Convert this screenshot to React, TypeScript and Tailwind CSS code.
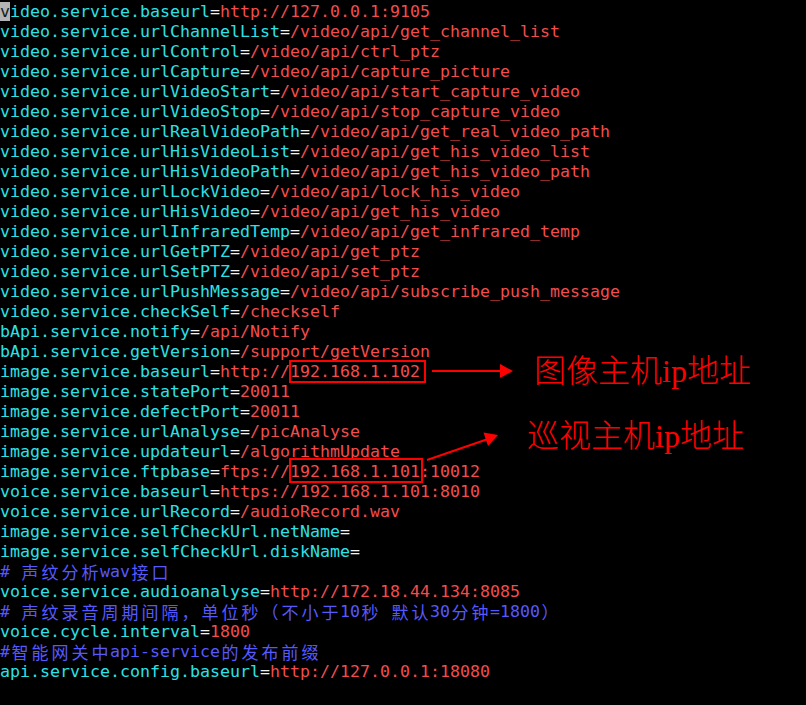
import * as React from "react";

type Seg = [string, "k" | "e" | "v" | "c"];

const KEY = "#2ae2e8";
const VAL = "#f24d4d";
const CMT = "#5858ff";

// key=value lines from the properties file, comments start with #
const LINES: string[] = [
  "video.service.baseurl=http://127.0.0.1:9105",
  "video.service.urlChannelList=/video/api/get_channel_list",
  "video.service.urlControl=/video/api/ctrl_ptz",
  "video.service.urlCapture=/video/api/capture_picture",
  "video.service.urlVideoStart=/video/api/start_capture_video",
  "video.service.urlVideoStop=/video/api/stop_capture_video",
  "video.service.urlRealVideoPath=/video/api/get_real_video_path",
  "video.service.urlHisVideoList=/video/api/get_his_video_list",
  "video.service.urlHisVideoPath=/video/api/get_his_video_path",
  "video.service.urlLockVideo=/video/api/lock_his_video",
  "video.service.urlHisVideo=/video/api/get_his_video",
  "video.service.urlInfraredTemp=/video/api/get_infrared_temp",
  "video.service.urlGetPTZ=/video/api/get_ptz",
  "video.service.urlSetPTZ=/video/api/set_ptz",
  "video.service.urlPushMessage=/video/api/subscribe_push_message",
  "video.service.checkSelf=/checkself",
  "bApi.service.notify=/api/Notify",
  "bApi.service.getVersion=/support/getVersion",
  "image.service.baseurl=http://192.168.1.102",
  "image.service.statePort=20011",
  "image.service.defectPort=20011",
  "image.service.urlAnalyse=/picAnalyse",
  "image.service.updateurl=/algorithmUpdate",
  "image.service.ftpbase=ftps://192.168.1.101:10012",
  "voice.service.baseurl=https://192.168.1.101:8010",
  "voice.service.urlRecord=/audioRecord.wav",
  "image.service.selfCheckUrl.netName=",
  "image.service.selfCheckUrl.diskName=",
  "# 声纹分析wav接口",
  "voice.service.audioanalyse=http://172.18.44.134:8085",
  "# 声纹录音周期间隔，单位秒（不小于10秒 默认30分钟=1800）",
  "voice.cycle.interval=1800",
  "#智能网关中api-service的发布前缀",
  "api.service.config.baseurl=http://127.0.0.1:18080",
];

function split(line: string): Seg[] {
  if (line.startsWith("#")) return [[line, "c"]];
  const i = line.indexOf("=");
  return [
    [line.slice(0, i), "k"],
    ["=", "e"],
    [line.slice(i + 1), "v"],
  ];
}

const isWide = (ch: string) => ch.charCodeAt(0) >= 0x2e80;

function Chars({ text }: { text: string }) {
  // terminal cells: CJK glyphs take two columns (20px)
  const out: React.ReactNode[] = [];
  let buf = "";
  Array.from(text).forEach((ch, i) => {
    if (isWide(ch)) {
      if (buf) out.push(buf);
      buf = "";
      out.push(
        <span
          key={i}
          className="inline-block w-[20px] text-center align-top text-[17px] font-['Noto_Sans_CJK_SC',sans-serif]"
        >
          {ch}
        </span>
      );
    } else buf += ch;
  });
  if (buf) out.push(buf);
  return <>{out}</>;
}

function Line({ line, first }: { line: string; first: boolean }) {
  const segs = split(line);
  return (
    <div className="h-[20px] leading-[20px] whitespace-pre">
      {segs.map(([t, kind], i) => {
        const color = kind === "k" ? KEY : kind === "v" ? VAL : kind === "c" ? CMT : "#f2f2f2";
        if (first && i === 0) {
          return (
            <span key={i} style={{ color }}>
              <span className="bg-[#b4b4b4] text-[#1a1a1a]">{t[0]}</span>
              {t.slice(1)}
            </span>
          );
        }
        return (
          <span key={i} style={{ color }}>
            <Chars text={t} />
          </span>
        );
      })}
    </div>
  );
}

export default function App() {
  return (
    <div className="relative w-[806px] h-[705px] bg-black overflow-hidden">
      <div className="flex flex-col pt-[2px] font-['DejaVu_Sans_Mono',monospace] text-[16.61px]">
        {LINES.map((l, i) => (
          <Line key={i} line={l} first={i === 0} />
        ))}
      </div>

      {/* annotation overlay: boxes + arrows */}
      <svg className="absolute left-0 top-0" width="806" height="705" viewBox="0 0 806 705">
        <rect x="290" y="361" width="135" height="21" fill="none" stroke="#f00" strokeWidth="2" />
        <rect x="290" y="459" width="132" height="23" fill="none" stroke="#f00" strokeWidth="2" />
        <line x1="432" y1="371" x2="501" y2="371" stroke="#f00" strokeWidth="2" />
        <polygon points="500,364 513,371 500,378" fill="#f00" />
        <line x1="427" y1="460" x2="488" y2="439" stroke="#f00" strokeWidth="2" />
        <polygon points="498,435 488,446 483.5,432.6" fill="#f00" />
      </svg>

      <span className="absolute left-[534px] top-[351px] text-[32px] leading-[40px] font-light text-[#f00] font-['Liberation_Serif','Noto_Sans_CJK_SC',serif]">
        图像主机ip地址
      </span>
      <span className="absolute left-[527px] top-[416px] text-[32px] leading-[40px] font-light text-[#f00] font-['Liberation_Serif','Noto_Sans_CJK_SC',serif]">
        巡视主机ip地址
      </span>
    </div>
  );
}
